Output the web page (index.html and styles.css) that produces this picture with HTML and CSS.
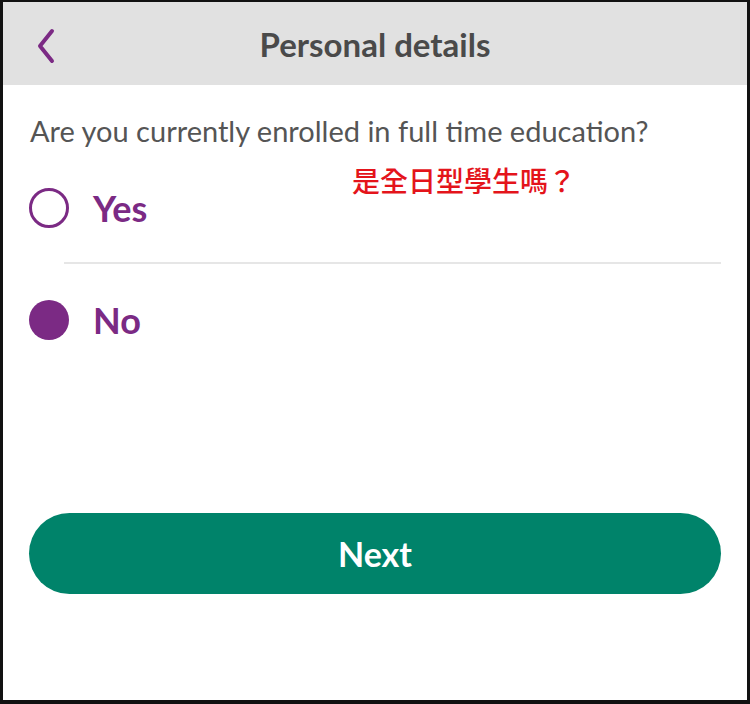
FILE: index.html
```html
<!DOCTYPE html>
<html lang="en">
<head>
  <meta charset="UTF-8" />
  <meta name="viewport" content="width=device-width, initial-scale=1.0" />
  <title>Personal details</title>
  <link rel="stylesheet" href="styles.css">
</head>
<body>

  <div class="screen">
    <header class="topbar">
      <a class="back" href="#">
        <svg width="20" height="36" viewBox="0 0 20 36">
          <path d="M16 3 L4 18 L16 33" fill="none" stroke="#7b2a84" stroke-width="4" stroke-linecap="round" stroke-linejoin="round"/>
        </svg>
      </a>
      <h1>Personal details</h1>
    </header>

    <main class="content">
      <p class="question">Are you currently enrolled in full time education?</p>
      <span class="note">是全日型學生嗎？</span>

      <label class="option">
        <span class="radio"></span>
        <span class="label">Yes</span>
      </label>
      <div class="divider"></div>
      <label class="option">
        <span class="radio checked"></span>
        <span class="label">No</span>
      </label>

      <button class="next">Next</button>
    </main>
  </div>

</body>
</html>
```

FILE: styles.css
```css
body {
  margin: 0;
  font-family: Lato, "Noto Sans", sans-serif;
  background: #fff;
}

.screen {
  width: 750px;
  height: 704px;
  box-sizing: border-box;
  border-style: solid;
  border-color: #111;
  border-width: 2px 3px 4px 3px;
  position: relative;
  overflow: hidden;
}

.topbar {
  height: 83px;
  background: #e1e1e1;
  display: flex;
  align-items: center;
  justify-content: center;
  position: relative;
}

.back {
  position: absolute;
  left: 33px;
  top: 26px;
  display: block;
}

.topbar h1 {
  margin: 0;
  font-size: 33px;
  font-weight: 700;
  color: #4a4a4a;
}

.content {
  padding: 28px 26px 0;
  position: relative;
}

.question {
  margin: 0 0 0 1px;
  font-size: 29px;
  color: #555;
  line-height: 36px;
}

.note {
  position: absolute;
  left: 349px;
  top: 78px;
  font-family: "Noto Sans CJK TC", sans-serif;
  font-size: 28px;
  font-weight: 500;
  line-height: 34px;
  color: #e4141b;
}

.option {
  display: flex;
  align-items: center;
  gap: 24px;
  height: 56px;
}

.option:first-of-type {
  margin-top: 31px;
}

.radio {
  width: 34px;
  height: 34px;
  border: 3px solid #7b2a84;
  border-radius: 50%;
}

.radio.checked {
  width: 40px;
  height: 40px;
  border: 0;
  background: #7b2a84;
}

.label {
  font-size: 36px;
  font-weight: 700;
  color: #7b2a84;
}

.divider {
  height: 2px;
  background: #e6e6e6;
  margin: 26px 0 28px 35px;
}

.next {
  display: block;
  width: 692px;
  height: 81px;
  margin: 165px 0 0 0;
  border: 0;
  border-radius: 41px;
  background: #00836a;
  color: #fff;
  font-family: Lato, sans-serif;
  font-size: 34px;
  font-weight: 700;
}
```
